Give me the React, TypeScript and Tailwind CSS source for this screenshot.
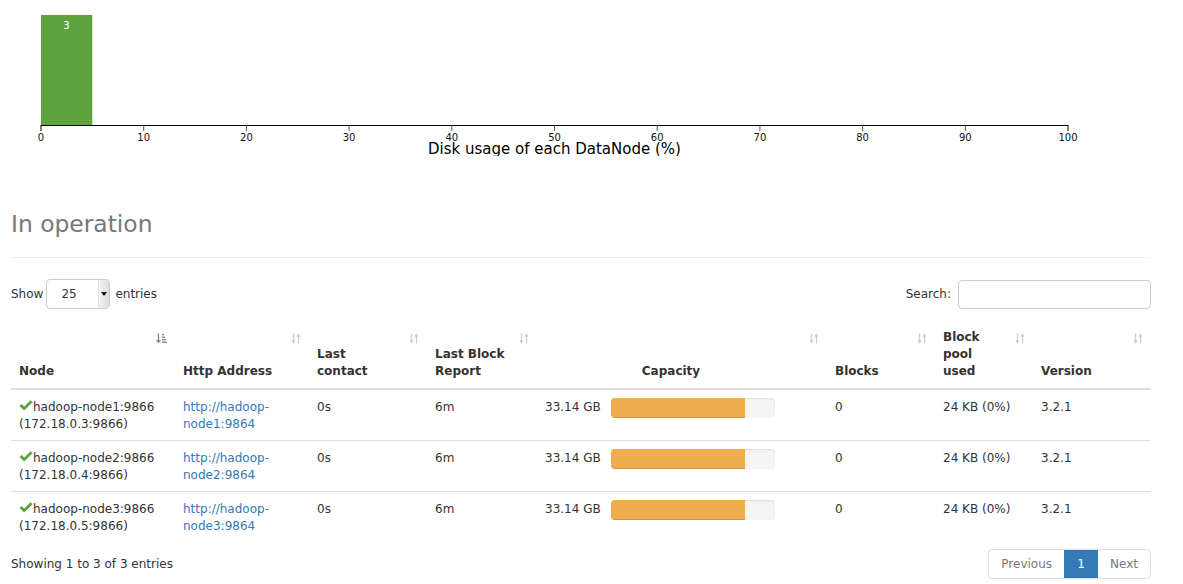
import React from "react";

const font = { fontFamily: '"DejaVu Sans", Verdana, sans-serif' };

function SortIcon({ active }: { active?: boolean }) {
  if (active) {
    return (
      <svg width="11" height="11" viewBox="0 0 11 11" className="absolute top-[11px] right-[8px]">
        <g stroke="#8a8a8a" strokeWidth="1.4" fill="none">
          <line x1="2.5" y1="0.5" x2="2.5" y2="9" />
        </g>
        <path d="M0 7 L2.5 10.5 L5 7 Z" fill="#8a8a8a" />
        <g fill="#8a8a8a">
          <rect x="6" y="1" width="2" height="1.4" />
          <rect x="6" y="3.5" width="3" height="1.4" />
          <rect x="6" y="6" width="4" height="1.4" />
          <rect x="6" y="8.6" width="5" height="1.4" />
        </g>
      </svg>
    );
  }
  return (
    <svg width="10" height="11" viewBox="0 0 10 11" className="absolute top-[11px] right-[8px]">
      <g stroke="#cfcfcf" strokeWidth="1.4" fill="none">
        <line x1="2.5" y1="0.5" x2="2.5" y2="8.5" />
        <line x1="7.5" y1="2.5" x2="7.5" y2="10.5" />
      </g>
      <path d="M0.3 7.3 L2.5 10.7 L4.7 7.3 Z" fill="#cfcfcf" />
      <path d="M5.3 3.7 L7.5 0.3 L9.7 3.7 Z" fill="#cfcfcf" />
    </svg>
  );
}

function Check() {
  return (
    <svg width="14" height="11" viewBox="0 0 14 11" className="inline-block align-[0px]">
      <path d="M0.5 6 L2.6 3.9 L5.2 6.5 L11.6 0.2 L13.6 2.3 L5.2 10.6 Z" fill="#5fa341" />
    </svg>
  );
}

function Chart() {
  const ticks = Array.from({ length: 11 }, (_, i) => i * 10);
  const x0 = 41;
  const x1 = 1068;
  const sx = (v: number) => x0 + ((x1 - x0) * v) / 100;
  return (
    <svg width="1183" height="156" className="block" style={font}>
      <rect x={41} y={15} width={51} height={110} fill="#5fa240" />
      <line x1={92.5} y1={15} x2={92.5} y2={125} stroke="#cfe3c3" strokeWidth="1" />
      <text x={66.5} y={29} fontSize="10" fill="#fff" textAnchor="middle">3</text>
      <line x1={x0} y1={125.5} x2={x1} y2={125.5} stroke="#000" strokeWidth="1.2" />
      {ticks.map((t) => (
        <g key={t}>
          <line x1={sx(t)} y1={125} x2={sx(t)} y2={131} stroke={t === 0 || t === 100 ? "#000" : "#555"} strokeWidth="1" />
          <text x={sx(t)} y={141} fontSize="10" fill="#111" textAnchor="middle">{t}</text>
        </g>
      ))}
      <text x={554.5} y={154} fontSize="15" fill="#000" textAnchor="middle">Disk usage of each DataNode (%)</text>
    </svg>
  );
}

const rows = [
  { n: "1", ip: "172.18.0.3" },
  { n: "2", ip: "172.18.0.4" },
  { n: "3", ip: "172.18.0.5" },
];

export default function App() {
  return (
    <div className="bg-white w-[1183px] min-h-[584px] text-[12px] text-[#333] leading-[17px]" style={font}>
      <Chart />
      <div className="ml-[11px] w-[1140px]">
        <div className="mt-[56px] pb-[20px] border-b border-[#eeeeee]">
          <h1 className="text-[23.4px] leading-[25px] text-[#777] font-normal">In operation</h1>
        </div>
        <div className="mt-[21px] flex items-center justify-between h-[30px]">
          <div className="flex items-center">
            <span>Show</span>
            <div className="ml-[3px] mr-[5px] w-[64px] h-[30px] border border-[#cccccc] rounded-[4px] flex items-center relative overflow-hidden">
              <span className="pl-[14px]">25</span>
              <div className="absolute right-0 top-0 bottom-0 w-[11px] bg-[linear-gradient(to_right,#f4f4f4,#dcdcdc)] border-l border-[#e2e2e2] flex items-center justify-center">
                <svg width="6" height="4" viewBox="0 0 6 4"><path d="M0 0 L6 0 L3 4 Z" fill="#111" /></svg>
              </div>
            </div>
            <span>entries</span>
          </div>
          <div className="flex items-center">
            <span>Search:</span>
            <div className="ml-[7px] w-[193px] h-[29px] border border-[#cccccc] rounded-[4px]" />
          </div>
        </div>
        <table className="mt-[13px] w-[1140px] table-fixed border-collapse">
          <colgroup>
            <col className="w-[164px]" />
            <col className="w-[134px]" />
            <col className="w-[118px]" />
            <col className="w-[110px]" />
            <col className="w-[290px]" />
            <col className="w-[108px]" />
            <col className="w-[98px]" />
            <col className="w-[118px]" />
          </colgroup>
          <thead>
            <tr className="border-b-2 border-[#dddddd] font-bold">
              <th className="relative text-left align-bottom pl-[8px] pr-[30px] pt-[7px] pb-[8px] font-bold">Node<SortIcon active /></th>
              <th className="relative text-left align-bottom pl-[8px] pr-[30px] pt-[7px] pb-[8px] font-bold">Http Address<SortIcon /></th>
              <th className="relative text-left align-bottom pl-[8px] pr-[30px] pt-[7px] pb-[8px] font-bold">Last<br />contact<SortIcon /></th>
              <th className="relative text-left align-bottom pl-[8px] pr-[10px] pt-[7px] pb-[8px] font-bold">Last Block<br />Report<SortIcon /></th>
              <th className="relative text-center align-bottom pl-[8px] pr-[30px] pt-[7px] pb-[8px] font-bold">Capacity<SortIcon /></th>
              <th className="relative text-left align-bottom pl-[8px] pr-[30px] pt-[7px] pb-[8px] font-bold">Blocks<SortIcon /></th>
              <th className="relative text-left align-bottom pl-[8px] pr-[10px] pt-[7px] pb-[8px] font-bold">Block<br />pool<br />used<SortIcon /></th>
              <th className="relative text-left align-bottom pl-[8px] pr-[30px] pt-[7px] pb-[8px] font-bold">Version<SortIcon /></th>
            </tr>
          </thead>
          <tbody>
            {rows.map((r, i) => (
              <tr key={r.n} className={i > 0 ? "border-t border-[#dddddd]" : ""}>
                <td className="align-top pt-[9px] pb-[7px] px-[8px]">
                  <div><Check />hadoop-node{r.n}:9866</div>
                  <div>({r.ip}:9866)</div>
                </td>
                <td className="align-top pt-[9px] pb-[7px] px-[8px] text-[#337ab7]">
                  <div>http://hadoop-</div>
                  <div>node{r.n}:9864</div>
                </td>
                <td className="align-top pt-[9px] pb-[7px] px-[8px]">0s</td>
                <td className="align-top pt-[9px] pb-[7px] px-[8px]">6m</td>
                <td className="align-top pt-[8px] pb-[7px] px-[8px]">
                  <div className="flex items-start">
                    <span className="w-[66px] mt-[1px]">33.14 GB</span>
                    <div className="w-[164px] h-[20px] rounded-[4px] bg-[#f5f5f5] shadow-[inset_0_1px_2px_rgba(0,0,0,0.1)] overflow-hidden">
                      <div className="w-[134px] h-[20px] bg-[#f0ad4e] shadow-[inset_0_-1px_0_rgba(0,0,0,0.15)]" />
                    </div>
                  </div>
                </td>
                <td className="align-top pt-[9px] pb-[7px] px-[8px]">0</td>
                <td className="align-top pt-[9px] pb-[7px] px-[8px]">24 KB (0%)</td>
                <td className="align-top pt-[9px] pb-[7px] px-[8px]">3.2.1</td>
              </tr>
            ))}
          </tbody>
        </table>
        <div className="mt-[7px] flex items-center justify-between h-[30px]">
          <span>Showing 1 to 3 of 3 entries</span>
          <div className="flex h-[30px] border border-[#dddddd] rounded-[4px] overflow-hidden">
            <span className="px-[12px] flex items-center text-[#777]">Previous</span>
            <span className="w-[34px] flex items-center justify-center bg-[#337ab7] text-white">1</span>
            <span className="px-[12px] flex items-center text-[#777]">Next</span>
          </div>
        </div>
      </div>
    </div>
  );
}
